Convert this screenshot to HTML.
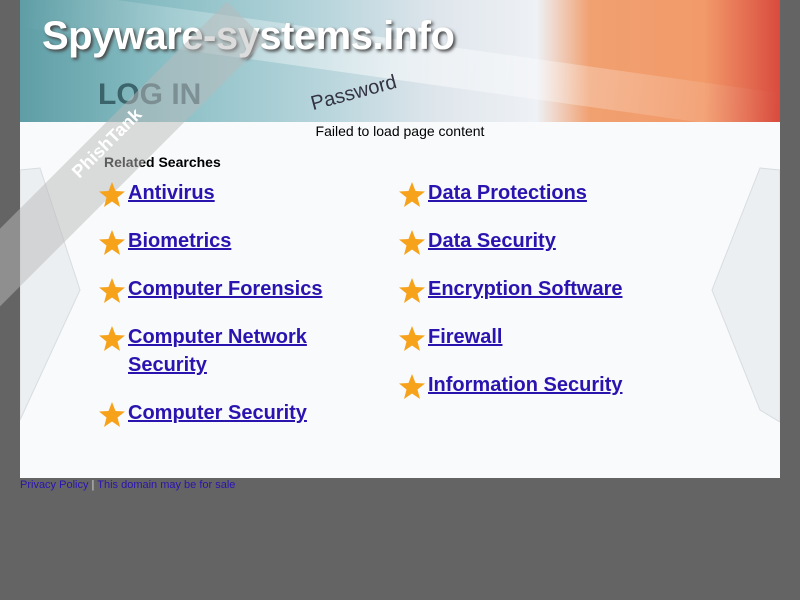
<!DOCTYPE html>
<html><head><meta charset="utf-8"><style>
body{margin:0;width:800px;height:600px;background:#646464;font-family:"Liberation Sans",sans-serif;position:relative;overflow:hidden}
#wrap{position:absolute;left:20px;top:0;width:760px;height:478px;background:#f8fafb;overflow:hidden}
#hdr{position:absolute;left:0;top:0;width:760px;height:122px;overflow:hidden;
background:linear-gradient(90deg,#5f9ea6 0%,#8cc0c6 20%,#b8d5dc 40%,#dfe6ec 55%,#eef1f5 68%,#f1a070 75%,#f29a6a 90%,#d94b3e 100%)}
#hdr .band{position:absolute;left:0;top:40px;width:760px;height:40px;background:linear-gradient(90deg,rgba(255,255,255,0),rgba(255,255,255,.5) 50%,rgba(255,255,255,0));transform:rotate(8deg)}
#hdr h1{position:absolute;left:22px;top:14px;margin:0;font-size:40px;font-weight:bold;color:#fff;text-shadow:2px 2px 3px #444;letter-spacing:-0.5px}
#hdr .login{position:absolute;left:78px;top:78px;font-size:30px;font-weight:bold;color:#2c5058;opacity:.8}
#hdr .pw{position:absolute;left:290px;top:82px;font-size:20px;color:#334;transform:rotate(-15deg)}
#msg{position:absolute;top:123px;width:760px;text-align:center;font-size:14px;color:#000}
#rel{position:absolute;left:84px;top:154px;font-size:14px;font-weight:bold;color:#000}
.l{position:absolute;font-size:20px;font-weight:bold;line-height:28px}
.l a{color:#2a14b0;text-decoration:underline}
.s{position:absolute;width:26px;height:26px}
#foot{position:absolute;left:20px;top:479px;font-size:11px;color:#ddd}
#foot a{color:#2a14b0}
.wm{position:absolute;left:-95px;top:135px;width:400px;height:55px;background:rgba(185,185,185,.5);transform:rotate(-45deg);color:#fff;font-weight:bold;font-size:18px;text-align:center;line-height:30px}
</style></head><body>
<div id="wrap">
<div id="hdr"><div class="band"></div><div class="login">LOG IN</div><div class="pw">Password</div><h1>Spyware-systems.info</h1></div>
<svg style="position:absolute;left:0;top:160px" width="760" height="270"><polygon points="0,10 20,8 60,130 0,260" fill="#eceff2" stroke="#d8dce0"/><polygon points="760,10 740,8 692,130 740,250 760,262" fill="#eceff2" stroke="#d8dce0"/></svg>
<div id="msg">Failed to load page content</div>
<div id="rel">Related Searches</div>
</div>
<div class="wm">&nbsp;&nbsp;&nbsp;&nbsp;&nbsp;&nbsp;PhishTank</div>
<svg width="0" height="0" style="position:absolute"><defs><polygon id="st" points="13,0 16.5,9 26,9.5 18.5,15.5 21,25 13,19.5 5,25 7.5,15.5 0,9.5 9.5,9" fill="#f7a21b"/></defs></svg>
<svg class="s" style="left:99px;top:182px"><use href="#st"/></svg><div class="l" style="left:128px;top:179px"><a>Antivirus</a></div>
<svg class="s" style="left:99px;top:230px"><use href="#st"/></svg><div class="l" style="left:128px;top:227px"><a>Biometrics</a></div>
<svg class="s" style="left:99px;top:278px"><use href="#st"/></svg><div class="l" style="left:128px;top:275px"><a>Computer Forensics</a></div>
<svg class="s" style="left:99px;top:326px"><use href="#st"/></svg><div class="l" style="left:128px;top:323px"><a>Computer Network<br>Security</a></div>
<svg class="s" style="left:99px;top:402px"><use href="#st"/></svg><div class="l" style="left:128px;top:399px"><a>Computer Security</a></div>
<svg class="s" style="left:399px;top:182px"><use href="#st"/></svg><div class="l" style="left:428px;top:179px"><a>Data Protections</a></div>
<svg class="s" style="left:399px;top:230px"><use href="#st"/></svg><div class="l" style="left:428px;top:227px"><a>Data Security</a></div>
<svg class="s" style="left:399px;top:278px"><use href="#st"/></svg><div class="l" style="left:428px;top:275px"><a>Encryption Software</a></div>
<svg class="s" style="left:399px;top:326px"><use href="#st"/></svg><div class="l" style="left:428px;top:323px"><a>Firewall</a></div>
<svg class="s" style="left:399px;top:374px"><use href="#st"/></svg><div class="l" style="left:428px;top:371px"><a>Information Security</a></div>
<div id="foot"><a>Privacy Policy</a> | <a>This domain may be for sale</a></div>
</body></html>
